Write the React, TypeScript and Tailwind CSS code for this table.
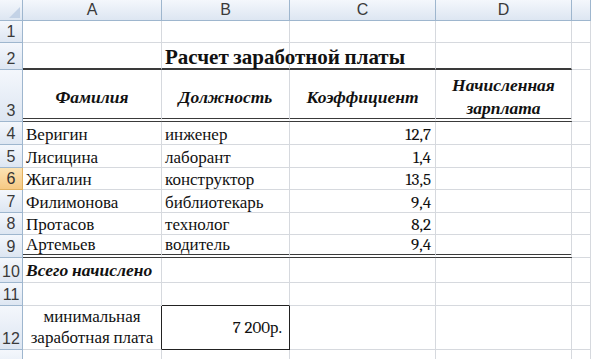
import React from 'react';

const grid = 'border-[#d6d9de]';
const hdr = 'bg-gradient-to-b from-[#f4f7fc] to-[#dde6f2] border-[#9eb6ce] text-[#3a3a3a]';
const sans = "font-['Liberation_Sans',Arial,sans-serif]";
const serif = "font-serif font-['Liberation_Serif','Times_New_Roman',serif]";

type CellProps = {
  className?: string;
  middle?: boolean;
  children?: React.ReactNode;
};

function Cell({ className = '', middle, children }: CellProps) {
  return (
    <div
      className={`flex min-w-0 whitespace-nowrap border-r border-b ${grid} px-[3px] leading-[19px] ${serif} ${
        middle ? 'items-center' : 'items-end'
      } ${className}`}
    >
      {children}
    </div>
  );
}

function RowHead({ n, active }: { n: number; active?: boolean }) {
  return (
    <div
      className={`flex items-end justify-center border-r border-b pb-[1px] text-[16px] leading-[19px] ${sans} ${
        active ? 'bg-gradient-to-b from-[#fbe3b4] to-[#f6c984] border-[#e0b060] text-[#333]' : hdr
      }`}
    >
      {n}
    </div>
  );
}

const people = [
  { name: 'Веригин', job: 'инженер', k: '12,7' },
  { name: 'Лисицина', job: 'лаборант', k: '1,4' },
  { name: 'Жигалин', job: 'конструктор', k: '13,5' },
  { name: 'Филимонова', job: 'библиотекарь', k: '9,4' },
  { name: 'Протасов', job: 'технолог', k: '8,2' },
  { name: 'Артемьев', job: 'водитель', k: '9,4' },
];

export default function App() {
  const strong = 'border-b-[2px] border-b-[#3a3a3a]';
  const dbl = 'border-b-[4px] border-double border-b-[#3a3a3a]';
  const head = `${dbl} justify-center pt-[6px] text-[17.5px] font-bold italic`;

  return (
    <div className="h-[359px] w-[591px] overflow-hidden bg-white text-[17px] text-[#111]">
      <div className="grid grid-cols-[23px_139px_128px_146px_136px_1fr] grid-rows-[21px_22px_27px_52px_23px_23px_22px_23px_22px_23px_25px_23px_44px_30px]">
        {/* column headers */}
        <div className={`relative border-r border-b ${hdr}`}>
          <svg className="absolute right-[2px] bottom-[2px]" width="11" height="11" viewBox="0 0 11 11">
            <polygon points="11,0 11,11 0,11" fill="#c3d2e6" />
          </svg>
        </div>
        {['A', 'B', 'C', 'D', ''].map((c, i) => (
          <div key={i} className={`flex items-center justify-center border-r border-b text-[16px] ${sans} ${hdr}`}>
            {c}
          </div>
        ))}

        {/* row 1 */}
        <RowHead n={1} />
        <Cell />
        <Cell />
        <Cell />
        <Cell />
        <Cell />

        {/* row 2 */}
        <RowHead n={2} />
        <Cell className={strong} />
        <Cell className={`${strong} overflow-visible pb-[1px]`}>
          <span className="text-[21px] font-bold">Расчет заработной платы</span>
        </Cell>
        <Cell className={strong} />
        <Cell className={strong} />
        <Cell />

        {/* row 3 */}
        <RowHead n={3} />
        <Cell middle className={head}>Фамилия</Cell>
        <Cell middle className={head}>Должность</Cell>
        <Cell middle className={head}>Коэффициент</Cell>
        <Cell middle className={head}>
          <div className="text-center leading-[23px]">
            Начисленная
            <br />
            зарплата
          </div>
        </Cell>
        <Cell />

        {/* rows 4-9 */}
        {people.map((p, i) => {
          const b = i === people.length - 1 ? dbl : '';
          return (
            <React.Fragment key={p.name}>
              <RowHead n={i + 4} active={i === 2} />
              <Cell className={b}>{p.name}</Cell>
              <Cell className={b}>{p.job}</Cell>
              <Cell className={`${b} justify-end pr-[4px]`}>{p.k}</Cell>
              <Cell className={b} />
              <Cell />
            </React.Fragment>
          );
        })}

        {/* row 10 */}
        <RowHead n={10} />
        <Cell className="pb-[2px] text-[17.5px] font-bold italic">Всего начислено</Cell>
        <Cell />
        <Cell />
        <Cell />
        <Cell />

        {/* row 11 */}
        <RowHead n={11} />
        <Cell />
        <Cell className="border-b-[#222]" />
        <Cell />
        <Cell />
        <Cell />

        {/* row 12 */}
        <RowHead n={12} />
        <Cell className="justify-center border-r-[#222] pb-[1px]">
          <div className="text-center leading-[21px]">
            минимальная
            <br />
            заработная плата
          </div>
        </Cell>
        <Cell middle className="justify-end border-r-[#222] border-b-[#222] pr-[7px]">
          7 200р.
        </Cell>
        <Cell />
        <Cell />
        <Cell />

        {/* row 13 */}
        <RowHead n={13} />
        <Cell />
        <Cell />
        <Cell />
        <Cell />
        <Cell />
      </div>
    </div>
  );
}
